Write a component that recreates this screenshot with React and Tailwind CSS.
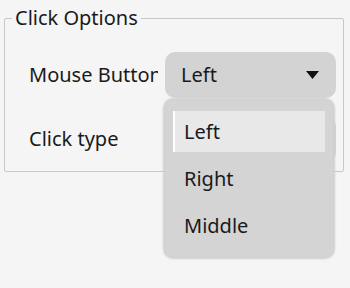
const font = { fontFamily: '"Noto Sans", "Open Sans", sans-serif' };

const Select = ({ value }) => (
  <div className="w-[171px] h-[46px] rounded-[10px] bg-[#d3d3d3] flex items-center justify-between pl-[16px] pr-[17px]">
    <span className="text-[20px] text-[#1a1a1a]">{value}</span>
    <svg width="13" height="8" viewBox="0 0 13 8">
      <path d="M0 0 L13 0 L6.5 8 Z" fill="#111" />
    </svg>
  </div>
);

export default function App() {
  const options = ["Left", "Right", "Middle"];

  return (
    <div className="relative w-[350px] h-[288px] bg-[#f5f5f5] pt-[7px] pl-[4px]" style={font}>
      <fieldset className="w-[340px] h-[165px] border border-[#c8c8c8] rounded-[2px]">
        <legend className="ml-[7px] px-[3px] text-[20px] leading-[22px] text-[#1a1a1a]">
          Click Options
        </legend>
        <div className="flex flex-col gap-[18px] pl-[24px] pr-[7px] pt-[23px]">
          <div className="flex items-center justify-between">
            <div className="w-[129px] overflow-hidden whitespace-nowrap text-[20px] text-[#1a1a1a]">
              Mouse Button
            </div>
            <Select value="Left" />
          </div>
          <div className="flex items-center justify-between">
            <div className="text-[20px] text-[#1a1a1a]">Click type</div>
            <Select value="" />
          </div>
        </div>
      </fieldset>

      {/* open dropdown */}
      <div className="absolute left-[165px] top-[100px] w-[168px] h-[157px] rounded-[8px] bg-[#d4d4d4] shadow-[0_0_2px_2px_#cfcfcf] px-[8px] pt-[8px]">
        {options.map((o, i) => (
          <div key={o} className="h-[47px] flex items-center">
            {i === 0 ? (
              <div className="w-full h-[41px] bg-[#e8e8e8] border-l-2 border-white flex items-center pl-[9px] text-[20px] text-[#1a1a1a]">
                {o}
              </div>
            ) : (
              <div className="pl-[11px] text-[20px] text-[#1a1a1a]">{o}</div>
            )}
          </div>
        ))}
      </div>
    </div>
  );
}
